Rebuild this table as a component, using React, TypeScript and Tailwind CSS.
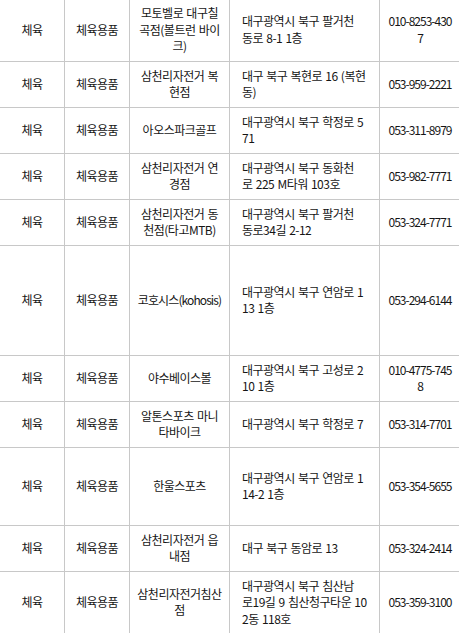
type Row = {
  name: string;
  addr: string;
  tel: string;
  h?: string;
  tight?: boolean;
};

// line breaks follow the original page's wrapping
const rows: Row[] = [
  { name: "모토벨로 대구칠\n곡점(볼트런 바이\n크)", addr: "대구광역시 북구 팔거천\n동로 8-1 1층", tel: "010-8253-430\n7" },
  { name: "삼천리자전거 복\n현점", addr: "대구 북구 복현로 16 (복현\n동)", tel: "053-959-2221" },
  { name: "아오스파크골프", addr: "대구광역시 북구 학정로 5\n71", tel: "053-311-8979" },
  { name: "삼천리자전거 연\n경점", addr: "대구광역시 북구 동화천\n로 225 M타워 103호", tel: "053-982-7771" },
  { name: "삼천리자전거 동\n천점(타고MTB)", addr: "대구광역시 북구 팔거천\n동로34길 2-12", tel: "053-324-7771" },
  { name: "코호시스(kohosis)", addr: "대구광역시 북구 연암로 1\n13 1층", tel: "053-294-6144", h: "h-[110px]", tight: true },
  { name: "야수베이스볼", addr: "대구광역시 북구 고성로 2\n10 1층", tel: "010-4775-745\n8" },
  { name: "알톤스포츠 마니\n타바이크", addr: "대구광역시 북구 학정로 7", tel: "053-314-7701" },
  { name: "한울스포츠", addr: "대구광역시 북구 연암로 1\n14-2 1층", tel: "053-354-5655", h: "h-[78px]" },
  { name: "삼천리자전거 읍\n내점", addr: "대구 북구 동암로 13", tel: "053-324-2414" },
  { name: "삼천리자전거침산\n점", addr: "대구광역시 북구 침산남\n로19길 9 침산청구타운 10\n2동 118호", tel: "053-359-3100" },
];

const cell = "border border-[#c8c8c8] py-[6px] align-middle whitespace-pre-line break-all";

export default function App() {
  return (
    <div className="w-[459px] h-[633px] overflow-hidden bg-white">
      <table
        className="table-fixed border-collapse w-[461px] -ml-px -mt-[2px] text-[12px] leading-[16.5px] tracking-[-0.5px] [word-spacing:1px] text-[#151515]"
        style={{ fontFamily: '"Noto Sans CJK KR", "Noto Sans", sans-serif' }}
      >
        <colgroup>
          <col className="w-[65px]" />
          <col className="w-[65px]" />
          <col className="w-[100px]" />
          <col className="w-[150px]" />
          <col className="w-[81px]" />
        </colgroup>
        <tbody>
          {rows.map((r, i) => (
            <tr key={i} className={r.h}>
              <td className={`${cell} px-2 text-center`}>체육</td>
              <td className={`${cell} px-2 text-center`}>체육용품</td>
              <td className={`${cell} px-[5px] text-center ${r.tight ? "tracking-[-0.9px]" : ""}`}>{r.name}</td>
              <td className={`${cell} pl-3 pr-2 text-left`}>{r.addr}</td>
              <td className={`${cell} px-[5px] text-center tracking-[-1px]`}>{r.tel}</td>
            </tr>
          ))}
        </tbody>
      </table>
    </div>
  );
}
